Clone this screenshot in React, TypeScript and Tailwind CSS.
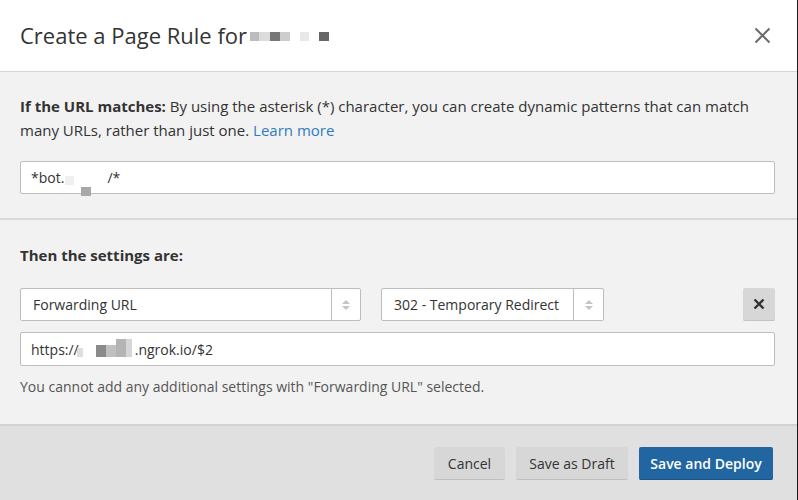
import React from "react";

const Blot = ({ c, w = 10, h = 9 }: { c: string; w?: number; h?: number }) => (
  <span className="inline-block" style={{ background: c, width: w, height: h }} />
);

const UpDown = () => (
  <svg width="10" height="14" viewBox="0 0 10 14">
    <path d="M5 2 L9 6 H1 Z" fill="#c4c4c4" />
    <path d="M5 12 L9 8 H1 Z" fill="#c4c4c4" />
  </svg>
);

function Select({ label, width, arrow }: { label: string; width: string; arrow: string }) {
  return (
    <div className={`flex h-[33px] ${width} bg-white border border-[#bdbdbd] rounded-[2px]`}>
      <div className="flex-1 flex items-center pl-3 text-[14px] text-[#333]">{label}</div>
      <div className={`${arrow} flex items-center justify-center border-l border-[#bdbdbd]`}>
        <UpDown />
      </div>
    </div>
  );
}

export default function App() {
  return (
    <div className="w-[798px] h-[500px] bg-[#1a1a1a] overflow-hidden" style={{ fontFamily: "'Open Sans', sans-serif" }}>
      <div className="w-[797px] h-[500px] flex flex-col">
        {/* header */}
        <div className="h-[72px] bg-white border-b border-[#d6d6d6] flex items-center justify-between pl-5 pr-6">
          <div className="flex items-center text-[22px] text-[#333] mt-[-1px]">
            <span>Create a Page Rule for</span>
            <span className="flex items-center ml-[3px] mt-[3px]">
              <Blot c="#bcbcbc" w={9} />
              <Blot c="#dcdcdc" w={11} />
              <Blot c="#777" w={10} />
              <Blot c="#cdcdcd" w={10} />
              <span className="w-[10px]" />
              <Blot c="#e8e8e8" w={9} />
              <span className="w-[10px]" />
              <Blot c="#666" w={10} />
            </span>
          </div>
          <svg width="17" height="17" viewBox="0 0 17 17" className="mr-[2px]">
            <path d="M1.5 1.5 L15.5 15.5 M15.5 1.5 L1.5 15.5" stroke="#6b6b6b" strokeWidth="2" />
          </svg>
        </div>

        {/* URL match */}
        <div className="h-[148px] bg-[#f2f2f2] border-b-2 border-[#d9d9d9] pl-5 pr-[22px] pt-[22px]">
          <p className="text-[15px] leading-[24px] text-[#333]">
            <span className="font-bold">If the URL matches:</span> By using the asterisk (*) character,
            you can create dynamic patterns that can match many URLs, rather than just one.{" "}
            <span className="text-[#2f7bbf]">Learn more</span>
          </p>
          <div className="mt-[19px] h-[33px] bg-white border border-[#bdbdbd] rounded-[2px] flex items-center pl-[10px] text-[14px] text-[#333] relative">
            <span>*bot.</span>
            <span className="absolute left-[44px] top-[7px]"><Blot c="#f0f0f0" w={9} /></span>
            <span className="absolute left-[60px] top-[18px]"><Blot c="#a8a8a8" w={10} h={9} /></span>
            <span className="ml-[43px]">/*</span>
          </div>
        </div>

        {/* settings */}
        <div className="flex-1 bg-[#f2f2f2] pl-5 pr-[22px] pt-[23px]">
          <p className="text-[15px] font-bold text-[#333] leading-[24px]">Then the settings are:</p>
          <div className="mt-[21px] flex items-center">
            <Select label="Forwarding URL" width="w-[341px]" arrow="w-[29px]" />
            <div className="w-[20px]" />
            <Select label="302 - Temporary Redirect" width="w-[223px]" arrow="w-[30px]" />
            <div className="flex-1" />
            <button className="w-[32px] h-[33px] bg-[#d7d7d7] border-b border-[#c2c2c2] rounded-[2px] flex items-center justify-center">
              <svg width="12" height="12" viewBox="0 0 12 12">
                <path d="M1.5 1.5 L10.5 10.5 M10.5 1.5 L1.5 10.5" stroke="#333" strokeWidth="2.4" />
              </svg>
            </button>
          </div>
          <div className="mt-[11px] h-[34px] bg-white border border-[#bdbdbd] rounded-[2px] flex items-center pl-[10px] text-[14px] text-[#333] relative">
            <span>https://</span>
            <span className="absolute left-[56px] top-[8px]"><Blot c="#dedede" w={6} h={9} /></span>
            <span className="absolute left-[75px] top-[12px] flex">
              <Blot c="#8a8a8a" w={10} h={12} />
              <Blot c="#c0c0c0" w={10} h={12} />
            </span>
            <span className="absolute left-[95px] top-[6px] flex">
              <Blot c="#b4b4b4" w={10} h={18} />
              <Blot c="#d6d6d6" w={6} h={18} />
            </span>
            <span className="ml-[56px]">.ngrok.io/$2</span>
          </div>
          <p className="mt-[10px] text-[14px] text-[#555] leading-[22px]">
            You cannot add any additional settings with "Forwarding URL" selected.
          </p>
        </div>

        {/* footer */}
        <div className="h-[76px] bg-[#e0e0e0] border-t-2 border-[#d2d2d2] flex items-start justify-end pr-6 pt-[21px] gap-[11px]">
          <button className="h-[33px] w-[71px] bg-[#d7d7d7] border-b border-[#bfbfbf] rounded-[2px] text-[14px] text-[#333]">
            Cancel
          </button>
          <button className="h-[33px] w-[112px] bg-[#d7d7d7] border-b border-[#bfbfbf] rounded-[2px] text-[14px] text-[#333]">
            Save as Draft
          </button>
          <button className="h-[33px] w-[134px] bg-[#2266a1] border-b border-[#1b5287] rounded-[2px] text-[14px] font-semibold text-white">
            Save and Deploy
          </button>
        </div>
      </div>
    </div>
  );
}
